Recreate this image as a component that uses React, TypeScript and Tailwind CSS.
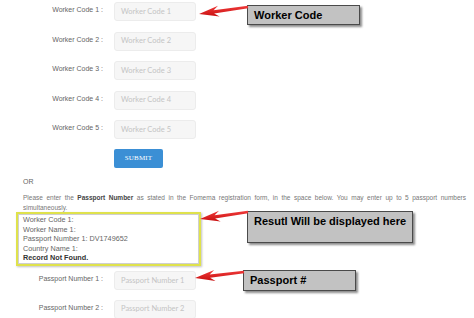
import React from "react";

type Pt = [number, number];

function arrowPoints(tip: Pt, end: Pt): string {
  const dx = end[0] - tip[0];
  const dy = end[1] - tip[1];
  const len = Math.hypot(dx, dy);
  const ux = dx / len;
  const uy = dy / len;
  const nx = -uy;
  const ny = ux;
  const headLen = 20;
  const headW = 5.5;
  const shaftW = 1.6;
  const bx = tip[0] + ux * headLen;
  const by = tip[1] + uy * headLen;
  const neckX = tip[0] + ux * (headLen - 5);
  const neckY = tip[1] + uy * (headLen - 5);
  const pts: Pt[] = [
    tip,
    [bx + nx * headW, by + ny * headW],
    [neckX + nx * shaftW, neckY + ny * shaftW],
    [end[0] + nx * shaftW * 0.8, end[1] + ny * shaftW * 0.8],
    [end[0] - nx * shaftW * 0.8, end[1] - ny * shaftW * 0.8],
    [neckX - nx * shaftW, neckY - ny * shaftW],
    [bx - nx * headW, by - ny * headW],
  ];
  return pts.map((p) => `${p[0].toFixed(1)},${p[1].toFixed(1)}`).join(" ");
}

const workerRows = [1, 2, 3, 4, 5];

function Field({ label, placeholder }: { label: string; placeholder: string }) {
  return (
    <div className="flex items-center gap-[11px]">
      <div className="w-[103px] text-right text-[7px] leading-[10px] text-[#666] -mt-[3px] whitespace-nowrap">
        {label}
      </div>
      <div className="w-[82px] h-[19px] bg-[#f6f6f6] border border-[#ececec] rounded-[3px] flex items-center pl-[6px]">
        <span className="text-[7.5px] text-[#c4c4c4] font-['Lato',sans-serif] whitespace-nowrap">{placeholder}</span>
      </div>
    </div>
  );
}

function Callout({ text, className }: { text: string; className: string }) {
  return (
    <div
      className={
        "absolute bg-[#c2c2c2] border border-[#4a4a4a] shadow-[2px_2px_2px_rgba(0,0,0,0.45)] pl-[6px] text-[11px] font-bold text-black leading-[13px] whitespace-nowrap " +
        className
      }
    >
      {text}
    </div>
  );
}

export default function App() {
  return (
    <div className="relative w-[474px] h-[318px] overflow-hidden bg-white font-['Liberation_Sans',Arial,sans-serif]">
      <div className="flex flex-col pt-[2px]">
        <div className="flex flex-col gap-[10.5px]">
          {workerRows.map((n) => (
            <Field key={n} label={`Worker Code ${n} :`} placeholder={`Worker Code ${n}`} />
          ))}
        </div>
        <div className="pl-[114px] mt-[10px]">
          <div className="w-[49px] h-[19px] bg-[#3b8fd5] rounded-[2px] flex items-center justify-center">
            <span className="text-white text-[7px] font-['Liberation_Serif',serif] tracking-[0.2px]">SUBMIT</span>
          </div>
        </div>
        <div className="pl-[23px] mt-[9px] text-[7px] leading-[10px] text-[#666]">OR</div>
        <div className="pl-[23px] mt-[6px] w-[466px] text-[6.5px] leading-[9.5px] text-[#777] text-justify">
          Please enter the <b className="text-[#444]">Passport Number</b> as stated in the Fomema registration form, in the space below. You may enter up to 5 passport numbers simultaneously.
        </div>
        <div className="ml-[16px] w-[185px] h-[54px] border-2 border-[#dfe24c] shadow-[inset_0_0_0_1px_#cfcfcf,1px_1px_2px_rgba(0,0,0,0.25)] pl-[5px] pt-[1px] text-[7.25px] leading-[9.6px] text-[#666]">
          <div>Worker Code 1:</div>
          <div>Worker Name 1:</div>
          <div>Passport Number 1: DV1749652</div>
          <div>Country Name 1:</div>
          <div className="font-bold text-[#333]">Record Not Found.</div>
        </div>
        <div className="mt-[5px] flex flex-col gap-[9.5px]">
          <Field label="Passport Number 1 :" placeholder="Passport Number 1" />
          <Field label="Passport Number 2 :" placeholder="Passport Number 2" />
        </div>
      </div>

      <Callout text="Worker Code" className="left-[247px] top-[5px] w-[113px] h-[20px] pt-[3px]" />
      <Callout text="Resutl Will be displayed here" className="left-[247px] top-[211px] w-[166px] h-[32px] pt-[3px]" />
      <Callout text="Passport #" className="left-[243px] top-[270px] w-[113px] h-[21px] pt-[3px]" />

      <svg className="absolute inset-0 pointer-events-none" width="474" height="318" viewBox="0 0 474 318">
        <defs>
          <linearGradient id="red" x1="0" y1="0" x2="0" y2="1">
            <stop offset="0" stopColor="#f03a3a" />
            <stop offset="1" stopColor="#c81010" />
          </linearGradient>
        </defs>
        <polygon points={arrowPoints([199, 14], [248, 7])} fill="url(#red)" />
        <polygon points={arrowPoints([200, 219], [248, 212])} fill="url(#red)" />
        <polygon points={arrowPoints([195, 278], [244, 272])} fill="url(#red)" />
      </svg>
    </div>
  );
}
